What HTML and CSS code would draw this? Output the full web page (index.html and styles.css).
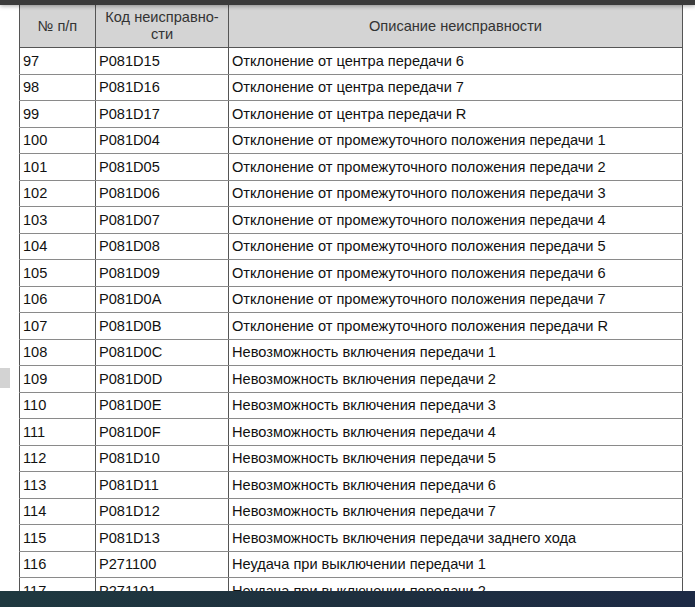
FILE: index.html
```html
<!DOCTYPE html>
<html lang="ru">
<head>
<meta charset="utf-8">
<title>Коды неисправностей</title>
<link rel="stylesheet" href="styles.css">
</head>
<body>
<div class="topbar"></div>
<div class="side-tab"></div>
<main class="page">
<table class="codes">
<colgroup><col class="c1"><col class="c2"><col class="c3"></colgroup>
<thead>
<tr><th>№ п/п</th><th>Код неисправно-<br>сти</th><th>Описание неисправности</th></tr>
</thead>
<tbody>
<tr><td>97</td><td>P081D15</td><td>Отклонение от центра передачи 6</td></tr>
<tr><td>98</td><td>P081D16</td><td>Отклонение от центра передачи 7</td></tr>
<tr><td>99</td><td>P081D17</td><td>Отклонение от центра передачи R</td></tr>
<tr><td>100</td><td>P081D04</td><td>Отклонение от промежуточного положения передачи 1</td></tr>
<tr><td>101</td><td>P081D05</td><td>Отклонение от промежуточного положения передачи 2</td></tr>
<tr><td>102</td><td>P081D06</td><td>Отклонение от промежуточного положения передачи 3</td></tr>
<tr><td>103</td><td>P081D07</td><td>Отклонение от промежуточного положения передачи 4</td></tr>
<tr><td>104</td><td>P081D08</td><td>Отклонение от промежуточного положения передачи 5</td></tr>
<tr><td>105</td><td>P081D09</td><td>Отклонение от промежуточного положения передачи 6</td></tr>
<tr><td>106</td><td>P081D0A</td><td>Отклонение от промежуточного положения передачи 7</td></tr>
<tr><td>107</td><td>P081D0B</td><td>Отклонение от промежуточного положения передачи R</td></tr>
<tr><td>108</td><td>P081D0C</td><td>Невозможность включения передачи 1</td></tr>
<tr><td>109</td><td>P081D0D</td><td>Невозможность включения передачи 2</td></tr>
<tr><td>110</td><td>P081D0E</td><td>Невозможность включения передачи 3</td></tr>
<tr><td>111</td><td>P081D0F</td><td>Невозможность включения передачи 4</td></tr>
<tr><td>112</td><td>P081D10</td><td>Невозможность включения передачи 5</td></tr>
<tr><td>113</td><td>P081D11</td><td>Невозможность включения передачи 6</td></tr>
<tr><td>114</td><td>P081D12</td><td>Невозможность включения передачи 7</td></tr>
<tr><td>115</td><td>P081D13</td><td>Невозможность включения передачи заднего хода</td></tr>
<tr><td>116</td><td>P271100</td><td>Неудача при выключении передачи 1</td></tr>
<tr><td>117</td><td>P271101</td><td>Неудача при выключении передачи 2</td></tr>
</tbody>
</table>
</main>
<div class="bottombar"></div>
</body>
</html>
```
FILE: styles.css
```css
html, body {
  margin: 0;
  padding: 0;
  background: #fff;
  overflow: hidden;
  height: 607px;
}
body {
  font-family: "Liberation Sans", Arial, sans-serif;
  color: #111;
  position: relative;
}
.topbar {
  position: absolute;
  left: 0;
  top: 0;
  width: 100%;
  height: 5px;
  background: #3b3b3b;
  box-shadow: 0 1px 4px rgba(0,0,0,0.35);
  z-index: 3;
}
.side-tab {
  position: absolute;
  left: 0;
  top: 368px;
  width: 10px;
  height: 20px;
  background: #d3d3d3;
  z-index: 2;
}
.bottombar {
  position: absolute;
  left: 0;
  top: 591px;
  width: 100%;
  height: 16px;
  background: linear-gradient(90deg, #1f3940 0%, #1e2f3e 50%, #1d2a45 100%);
  z-index: 3;
}
.page {
  padding: 4px 0 0 19px;
}
.codes {
  border-collapse: collapse;
  width: 663px;
  table-layout: fixed;
  font-size: 14.6px;
}
.c1 { width: 76px; }
.c2 { width: 133px; }
.c3 { width: 454px; }
.codes th {
  background: #d4d4d4;
  font-weight: normal;
  color: #333;
  font-size: 14.6px;
  height: 42px;
  padding: 0 2px;
  line-height: 17px;
  text-align: center;
  border: 1.5px solid #555;
  vertical-align: middle;
}
.codes td {
  height: 25.5px;
  padding: 0 3px;
  line-height: 16px;
  border-left: 1.5px solid #555;
  border-right: 1.5px solid #555;
  border-top: 1.5px solid #8a8a8a;
  border-bottom: 1.5px solid #8a8a8a;
  white-space: nowrap;
}
```
